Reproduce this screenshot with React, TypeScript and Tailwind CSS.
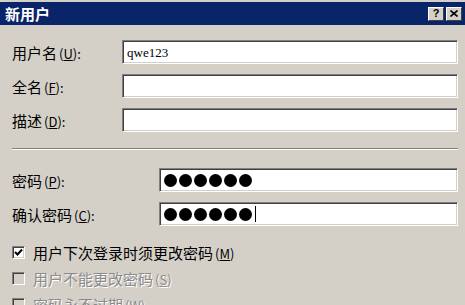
const FONT = "font-['Noto_Sans_CJK_SC','Noto_Sans',sans-serif]";

function Field({ children }: { children?: React.ReactNode }) {
  return (
    <div className="h-[24px] flex-1 bg-white border border-t-[#808080] border-l-[#808080] border-b-white border-r-white shadow-[inset_1px_1px_0_#404040,inset_-1px_-1px_0_#d4d0c8] flex items-center pl-[4px]">
      {children}
    </div>
  );
}

function Label({ text, k, w }: { text: string; k: string; w: string }) {
  return (
    <span className={`${w} text-[15px] text-black leading-none shrink-0`}>
      {text}
      <span className="text-[13px] ml-[2px]">(<span className="underline">{k}</span>):</span>
    </span>
  );
}

function Dots({ n, caret }: { n: number; caret?: boolean }) {
  return (
    <div className="flex items-center gap-[2px]">
      {Array.from({ length: n }).map((_, i) => (
        <span key={i} className="w-[13px] h-[13px] rounded-full bg-black" />
      ))}
      {caret && <span className="w-[1px] h-[16px] bg-black ml-[1px]" />}
    </div>
  );
}

function Check({ label, k, checked, disabled }: { label: string; k: string; checked?: boolean; disabled?: boolean }) {
  return (
    <div className="h-[26px] flex items-center gap-[8px]">
      <span
        className={`w-[13px] h-[13px] shrink-0 border border-t-[#808080] border-l-[#808080] border-b-white border-r-white shadow-[inset_1px_1px_0_#404040,inset_-1px_-1px_0_#d4d0c8] flex items-center justify-center ${disabled ? "bg-[#d4d0c8]" : "bg-white"}`}
      >
        {checked && (
          <svg width="9" height="9" viewBox="0 0 9 9">
            <path d="M1 4 L3.5 6.5 L8 1.5" stroke="black" strokeWidth="2" fill="none" />
          </svg>
        )}
      </span>
      <span className={`text-[15px] leading-none ${disabled ? "text-[#8a8a8a] [text-shadow:1px_1px_0_#fff]" : "text-black"}`}>
        {label}
        <span className="text-[13px] ml-[2px]">(<span className="underline">{k}</span>)</span>
      </span>
    </div>
  );
}

export default function App() {
  return (
    <div className={`w-[465px] h-[305px] bg-[#d4d0c8] overflow-hidden pt-[2px] ${FONT}`}>
      <div className="h-[23px] bg-[#0a246a] flex items-center pl-[5px] pr-[3px]">
        <span className="text-white font-bold text-[15px] leading-none flex-1">新用户</span>
        <div className="flex gap-[2px]">
          <span className="w-[16px] h-[14px] bg-[#d4d0c8] border border-t-white border-l-white border-b-[#404040] border-r-[#404040] flex items-center justify-center text-[11px] font-bold leading-none font-['Liberation_Sans',sans-serif]">?</span>
          <span className="w-[16px] h-[14px] bg-[#d4d0c8] border border-t-white border-l-white border-b-[#404040] border-r-[#404040] flex items-center justify-center">
            <svg width="8" height="7" viewBox="0 0 8 7">
              <path d="M0.5 0.5 L7.5 6.5 M7.5 0.5 L0.5 6.5" stroke="black" strokeWidth="1.6" />
            </svg>
          </span>
        </div>
      </div>

      <div className="pl-[12px] pr-[7px]">
        <div className="mt-[15px] flex items-center">
          <Label text="用户名" k="U" w="w-[110px]" />
          <Field>
            <span className="text-[13px] font-['Liberation_Serif',serif] leading-none">qwe123</span>
          </Field>
        </div>
        <div className="mt-[10px] flex items-center">
          <Label text="全名" k="F" w="w-[110px]" />
          <Field />
        </div>
        <div className="mt-[10px] flex items-center">
          <Label text="描述" k="D" w="w-[110px]" />
          <Field />
        </div>

        <div className="mt-[16px] h-[2px] border-t border-t-[#808080] border-b border-b-white" />

        <div className="mt-[18px] flex items-center">
          <Label text="密码" k="P" w="w-[147px]" />
          <Field>
            <Dots n={6} />
          </Field>
        </div>
        <div className="mt-[10px] flex items-center">
          <Label text="确认密码" k="C" w="w-[147px]" />
          <Field>
            <Dots n={6} caret />
          </Field>
        </div>

        <div className="mt-[13px]">
          <Check label="用户下次登录时须更改密码" k="M" checked />
          <Check label="用户不能更改密码" k="S" disabled />
          <Check label="密码永不过期" k="W" disabled />
        </div>
      </div>
    </div>
  );
}
